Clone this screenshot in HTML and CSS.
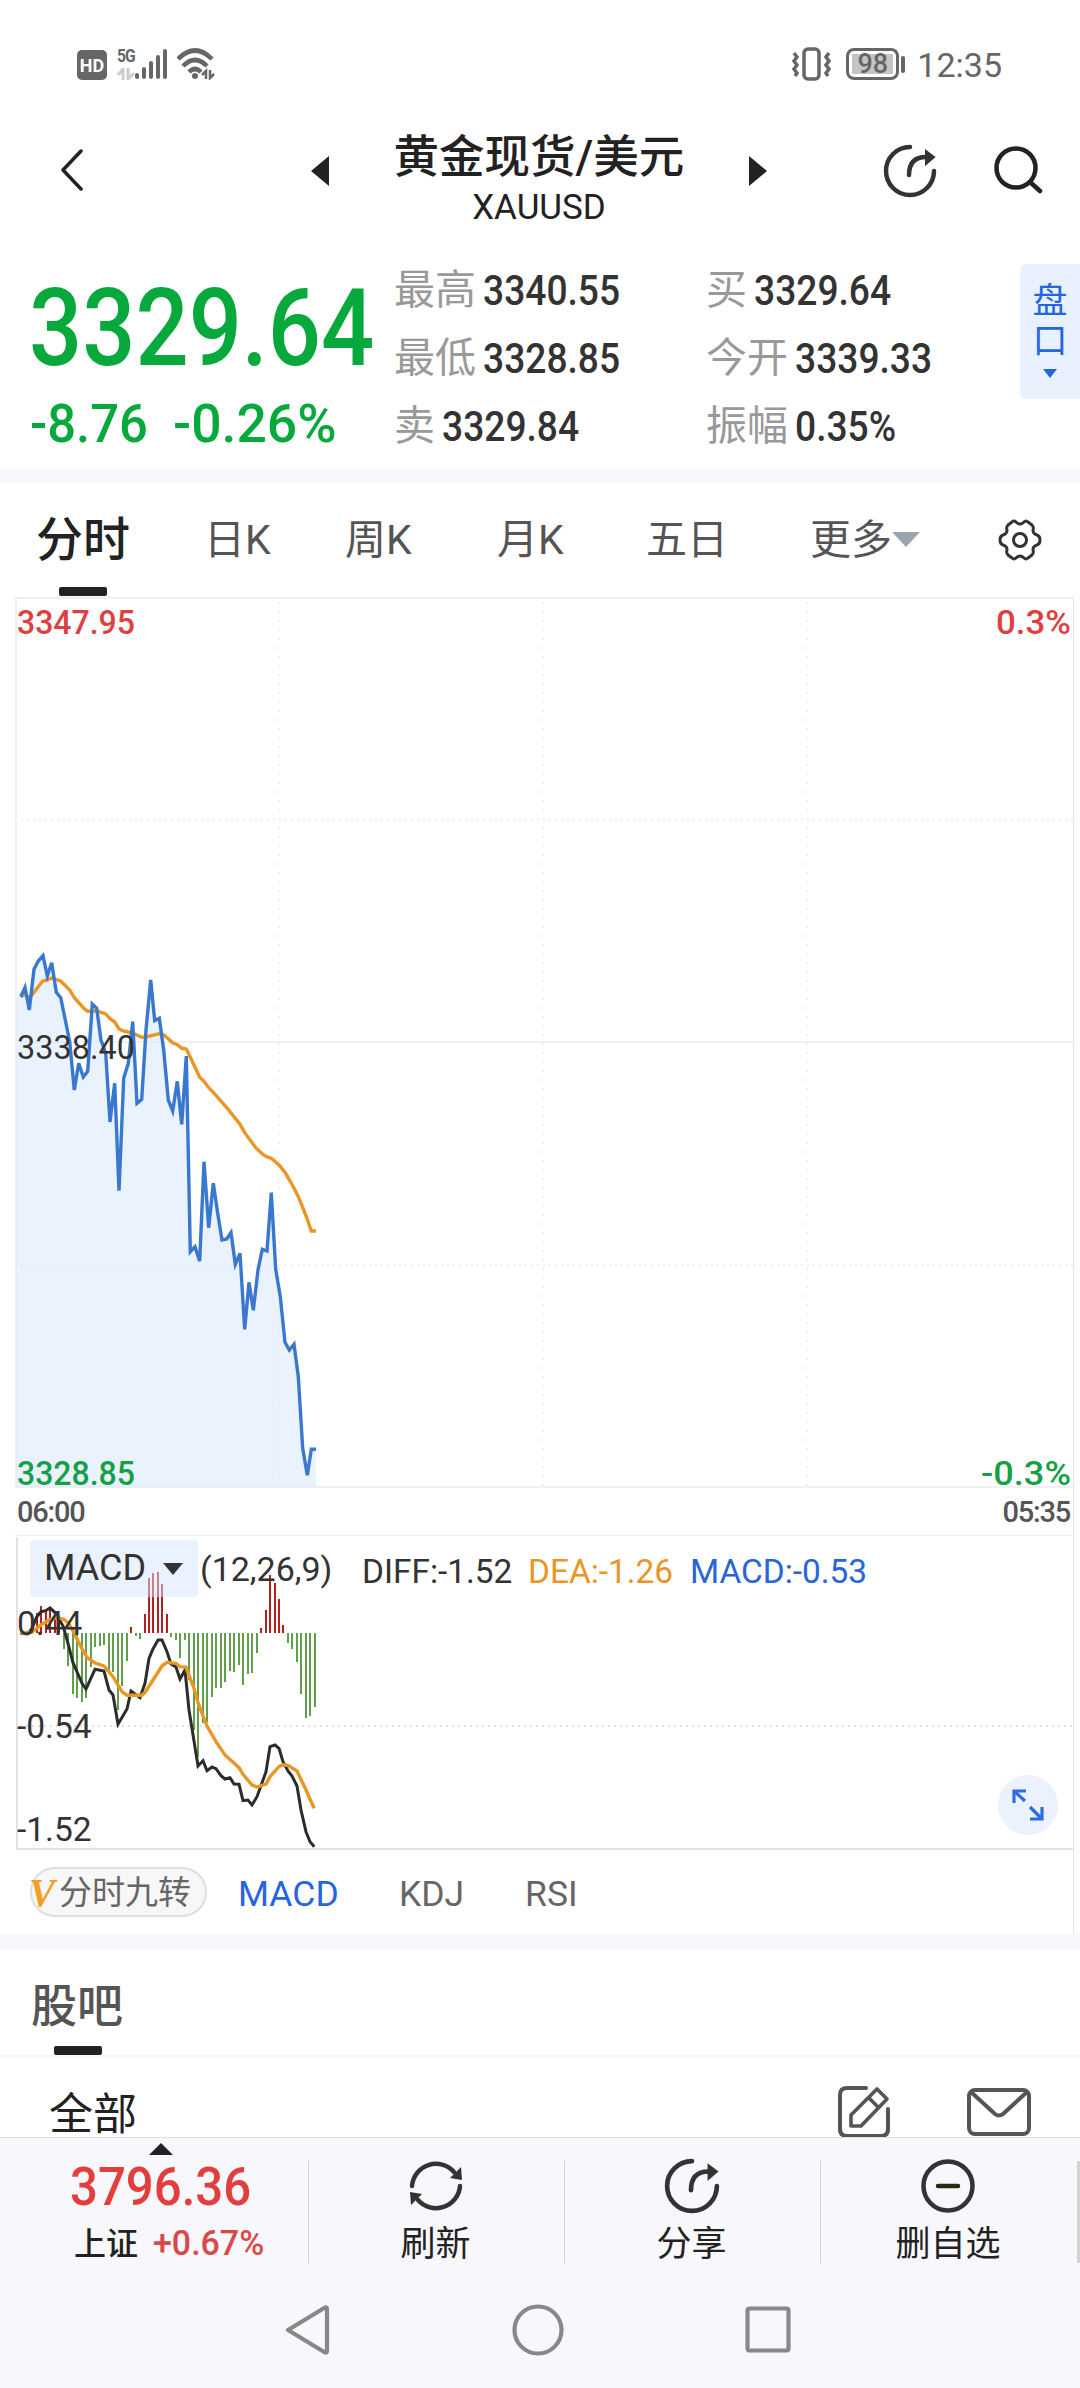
FILE: index.html
```html
<!DOCTYPE html>
<html lang="zh-CN">
<head>
    <meta charset="UTF-8">
    <meta name="viewport" content="width=device-width, initial-scale=1.0">
    <title>黄金现货/美元 XAUUSD</title>
    <link rel="stylesheet" href="styles.css">
</head>
<body>
    <!-- 系统状态栏 -->
    <div class="status-bar">
        <span class="hd-badge">HD</span>
        <div class="network">
            <span class="network-type">5G</span>
            <svg width="18" height="12" viewBox="0 0 18 12" fill="none" stroke="#ccc" stroke-width="3"><path d="M1 7 6 1V12M11 0V11L17 5"/></svg>
        </div>
        <svg class="signal" width="32" height="30" viewBox="0 0 32 30" fill="none" stroke="#666" stroke-width="4" stroke-linecap="round"><path d="M2 26V28M9 20V28M16 14V28M23 8V28M30 2V28"/></svg>
        <svg class="wifi" width="38" height="32" viewBox="0 0 38 32" fill="none" stroke="#666" stroke-width="4.5"><path d="M1 11Q18-6 35 11M6 18Q18 6 30 18M12 24Q18 18 24 24"/><circle cx="18" cy="28" r="3" fill="#666" stroke="none"/><path d="M25 27 29 23V31M33 22V30L37 26" stroke-width="2.5"/></svg>
        <svg class="vibrate" width="42" height="34" viewBox="0 0 42 34" fill="none" stroke="#666" stroke-width="3.5"><rect x="13" y="2" width="15" height="30" rx="4"/><path d="M3 6 6 10 3 14 6 18 3 22 6 26 4 29M38 6 35 10 38 14 35 18 38 22 35 26 37 29"/></svg>
        <div class="battery">98</div>
        <span class="clock">12:35</span>
    </div>

    <header class="header">
        <svg class="back" width="24" height="42" viewBox="0 0 24 42" fill="none" stroke="#222" stroke-width="3.5" stroke-linecap="round" stroke-linejoin="round"><path d="M21 2 3 21 21 40"/></svg>
        <div class="stock-switch">
            <svg width="18" height="30" viewBox="0 0 18 30" fill="#222"><path d="M0 15 18 0V30Z"/></svg>
            <div class="stock-name">
                <h1>黄金现货/美元</h1>
                <p>XAUUSD</p>
            </div>
            <svg width="18" height="30" viewBox="0 0 18 30" fill="#222"><path d="M18 15 0 0V30Z"/></svg>
        </div>
        <svg class="share" width="54" height="54" viewBox="0 0 54 54" fill="none" stroke="#333" stroke-width="4.5" stroke-linecap="round"><path d="M27 3A24 24 0 1 0 51 27"/><path d="M26 31C26 19 32 13 43 13"/><path d="M43 7V20L51 13Z" fill="#333" stroke-width="2"/></svg>
        <svg class="search" width="50" height="48" viewBox="0 0 50 48" fill="none" stroke="#222" stroke-width="4.5" stroke-linecap="round"><circle cx="22" cy="22" r="19.5"/><path d="M36 36 46 45"/></svg>
    </header>

    <section class="quote">
        <div class="quote-main">
            <div class="price"><span>3329.64</span></div>
            <div class="change"><span>-8.76</span><span class="percent">-0.26%</span></div>
        </div>
        <dl class="quote-grid">
            <div><dt>最高</dt><dd>3340.55</dd></div>
            <div><dt>买</dt><dd>3329.64</dd></div>
            <div><dt>最低</dt><dd>3328.85</dd></div>
            <div><dt>今开</dt><dd>3339.33</dd></div>
            <div><dt>卖</dt><dd>3329.84</dd></div>
            <div><dt>振幅</dt><dd>0.35%</dd></div>
        </dl>
        <div class="pankou">
            <span>盘</span>
            <span>口</span>
            <svg width="14" height="9" viewBox="0 0 14 9" fill="#2465e4"><path d="M0 0H14L7 9Z"/></svg>
        </div>
    </section>

    <!-- 周期切换 -->
    <nav class="period-tabs">
        <span class="period active">分时</span>
        <span class="period">日K</span>
        <span class="period">周K</span>
        <span class="period">月K</span>
        <span class="period">五日</span>
        <span class="period more">更多<svg width="28" height="15" viewBox="0 0 28 15" fill="#9aa5ae"><path d="M0 0H28L14 15Z"/></svg></span>
        <svg class="gear" width="44" height="42" viewBox="0 0 44 42" fill="none" stroke="#333" stroke-width="3" stroke-linejoin="round"><path d="M14 3Q16 1 18 3Q22 7 26 3Q28 1 30 3L34 6Q36 8 35 11Q35 15 39 16Q42 17 42 21Q42 25 39 26Q35 27 35 31Q36 34 34 36L30 39Q28 41 26 39Q22 35 18 39Q16 41 14 39L10 36Q8 34 9 31Q9 27 5 26Q2 25 2 21Q2 17 5 16Q9 15 9 11Q8 8 10 6Z"/><circle cx="22" cy="21" r="6.5"/></svg>
    </nav>

    <div class="chart-area">
        <!-- 分时走势 -->
        <svg class="price-chart" width="1080" height="891" viewBox="0 597 1080 891">
            <g class="grid">
                <path d="M16 598H1073M16 1042H1073M16 1487H1073M16 597V1487"/>
                <path class="dot-h" d="M21 819.5H1073M21 1265H1073"/>
                <path class="dot-v" d="M279 602V1487M543 602V1487M807 602V1487"/>
            </g>
            <polygon class="price-fill" points="16,997 20.7,996.7 25,987.5 29.3,1010 34,969.3 38.3,961 43,955.7 47.3,976 51.7,962.7 56.3,992.3 60.7,997.7 65.3,1020 69.7,1041.7 74.3,1090 78.7,1063.3 83.3,1077 87.7,1071.3 92.3,1004 96.7,1008.3 101,1040 105.7,1053 110,1122 114.7,1083.3 119,1190.7 123.7,1078.3 128.3,1063.3 132.7,1021.7 137,1103.3 141.7,1099.3 146,1030 150.7,980 154.7,1020.7 159.3,1018.3 163.7,1050 168.3,1100 172.7,1111 177.3,1081.3 181.7,1124.3 186.3,1056 190.3,1251.7 195,1246.7 199.7,1261.3 204,1161.7 208.7,1227.7 213.3,1183.3 217.7,1213.3 222,1240 226.7,1239 231,1232.7 235.3,1264.3 240,1253.3 244.7,1329.3 249,1282.3 253.3,1310.3 258,1270 262.3,1249.3 267,1251 271.3,1192.7 275.7,1269.3 280.3,1296.7 285,1342.3 289.3,1350 294,1344.3 298.3,1376.7 302.7,1448.3 307.3,1475.3 311.3,1449.3 316,1449.3 316,1487 16,1487"/>
            <polyline class="avg-line" points="20.7,996.7 25,994 29.3,998.3 33.3,993.3 42.7,981 47.3,980 51.7,978 60.7,981 69.7,990 74.3,997.7 83.3,1007.7 87.7,1011.3 96.7,1011 105.7,1014 110,1018.7 114.7,1022 119,1029 123.7,1031 132.7,1033 141.7,1037.3 146,1037 159.3,1033.7 163.7,1034.7 172.7,1042.7 177.3,1044.7 181.7,1048.3 186.3,1049 190.3,1057.3 199.7,1077.3 204,1081.3 208.7,1087.7 213.3,1092.3 226.7,1107.7 240,1124.3 244.7,1132.7 255.7,1147.7 262.3,1154 267,1157 271.3,1158.3 279,1165 285,1172.3 293.3,1186.7 298.3,1196.7 302.7,1207.3 307.3,1219.3 311.3,1231 316,1231"/>
            <polyline class="price-line" points="20.7,996.7 25,987.5 29.3,1010 34,969.3 38.3,961 43,955.7 47.3,976 51.7,962.7 56.3,992.3 60.7,997.7 65.3,1020 69.7,1041.7 74.3,1090 78.7,1063.3 83.3,1077 87.7,1071.3 92.3,1004 96.7,1008.3 101,1040 105.7,1053 110,1122 114.7,1083.3 119,1190.7 123.7,1078.3 128.3,1063.3 132.7,1021.7 137,1103.3 141.7,1099.3 146,1030 150.7,980 154.7,1020.7 159.3,1018.3 163.7,1050 168.3,1100 172.7,1111 177.3,1081.3 181.7,1124.3 186.3,1056 190.3,1251.7 195,1246.7 199.7,1261.3 204,1161.7 208.7,1227.7 213.3,1183.3 217.7,1213.3 222,1240 226.7,1239 231,1232.7 235.3,1264.3 240,1253.3 244.7,1329.3 249,1282.3 253.3,1310.3 258,1270 262.3,1249.3 267,1251 271.3,1192.7 275.7,1269.3 280.3,1296.7 285,1342.3 289.3,1350 294,1344.3 298.3,1376.7 302.7,1448.3 307.3,1475.3 311.3,1449.3 316,1449.3"/>
            <g class="chart-label">
                <text class="up" x="17" y="634" textLength="118" lengthAdjust="spacingAndGlyphs">3347.95</text>
                <text class="up" x="996" y="634" textLength="75" lengthAdjust="spacingAndGlyphs">0.3%</text>
                <text x="17" y="1058.5" textLength="118" lengthAdjust="spacingAndGlyphs">3338.40</text>
                <text class="down" x="17" y="1485" textLength="118" lengthAdjust="spacingAndGlyphs">3328.85</text>
                <text class="down" x="981" y="1485" textLength="90" lengthAdjust="spacingAndGlyphs">-0.3%</text>
            </g>
        </svg>

        <div class="time-axis">
            <span>06:00</span>
            <span>05:35</span>
        </div>

        <!-- MACD 副图 -->
        <div class="macd">
            <svg width="1080" height="315" viewBox="0 1535 1080 315">
                <path d="M15 1535.5H1073" stroke="#f0f0f0"/>
                <path d="M17 1537V1849H1073" fill="none" stroke="#e2e2e2" stroke-width="2"/>
                <path d="M20 1726H1073" stroke="#e2e2e2" stroke-width="2" stroke-dasharray="2 4"/>
                <path class="bar-up" d="M37 1633V1613M41 1633V1606M46 1633V1610M50 1633V1608M55 1633V1617M59 1633V1621M131 1633V1627M145 1633V1614M149 1633V1578M153 1633V1573M158 1633V1572M162 1633V1584M167 1633V1614M261 1633V1628M266 1633V1610M270 1633V1575M275 1633V1583M279 1633V1599M283 1633V1625"/>
                <path class="bar-down" d="M64 1633V1649M68 1633V1666M73 1633V1694M77 1633V1698M82 1633V1702M86 1633V1698M91 1633V1667M95 1633V1647M100 1633V1646M104 1633V1645M109 1633V1670M113 1633V1672M118 1633V1710M122 1633V1686M127 1633V1661M136 1633V1636M140 1633V1639M171 1633V1637M176 1633V1640M180 1633V1658M185 1633V1640M189 1633V1680M194 1633V1730M198 1633V1757M203 1633V1723M207 1633V1722M212 1633V1697M216 1633V1688M221 1633V1688M225 1633V1682M230 1633V1671M234 1633V1672M239 1633V1665M243 1633V1685M248 1633V1674M252 1633V1673M257 1633V1653M288 1633V1643M292 1633V1649M297 1633V1662M301 1633V1694M306 1633V1718M310 1633V1716M315 1633V1707"/>
                <polyline class="diff-line" points="20,1633 27.3,1634 31.7,1629 36.7,1617 41,1611.7 45.7,1610.7 50,1608 54.7,1612.3 59.3,1619.3 63.3,1626.7 68,1643.3 73,1662.7 82,1683.3 86,1689 95,1669.3 104,1671 109,1690 113,1695 118,1724.3 127,1709 131,1691 134,1693.3 140,1697.7 145,1683.3 149,1658.3 153,1649 158,1640 162,1640 167,1651.7 171,1664 176,1667 180,1679 185,1670 189,1710 194,1741 198,1766 203,1760.7 207,1770.7 212,1767 216,1768.7 221,1775.7 225,1779 230,1777.7 234,1784 239,1784.3 243,1800.7 248,1800 252,1805 257,1796.7 266,1771.7 270,1746.7 275,1745 279,1748.3 283,1761.7 288,1771 292,1776 297,1786 301,1810 306,1831.7 310,1841.7 314.3,1846.7"/>
                <polyline class="dea-line" points="20,1633 31.7,1632.3 41,1625 50,1619.3 57,1617.7 63.3,1619 68,1622.7 73,1630.7 82,1649 87,1657.3 95,1663 104,1666 113,1676.7 122,1691.7 127,1695.3 141.7,1695.3 145,1692.7 153,1680 162,1666 167,1662.3 176,1663.3 180,1666.7 186,1667.3 194,1688.3 198,1702.7 207,1726 216,1741.7 225,1755 239,1767.7 243,1774.3 252,1785 257,1787 266,1784 270,1776.7 279,1766.7 283,1764.7 288,1765.3 297,1771 306,1790 310,1799.3 314.3,1808.3"/>
                <g class="macd-label">
                    <text x="17" y="1635">0.44</text>
                    <text x="17" y="1738">-0.54</text>
                    <text x="17" y="1841">-1.52</text>
                </g>
            </svg>
            <div class="macd-head">
                <div class="macd-select">MACD<svg width="20" height="12" viewBox="0 0 20 12" fill="#333"><path d="M0 0H20L10 12Z"/></svg></div>
                <span class="params">(12,26,9)</span>
                <span class="diff">DIFF:-1.52</span>
                <span class="dea">DEA:-1.26</span>
                <span class="macd-value">MACD:-0.53</span>
            </div>
            <div class="expand">
                <svg width="32" height="32" viewBox="0 0 32 32" fill="none" stroke="#2f6be6" stroke-width="3.2"><path d="M14 2H2V14M2 2 13 12M18 30H30V18M30 30 18 18"/></svg>
            </div>
        </div>

        <div class="indicator-tabs">
            <div class="nine-turn"><i>V</i>分时九转</div>
            <span class="active">MACD</span>
            <span>KDJ</span>
            <span>RSI</span>
        </div>
    </div>

    <section class="guba">
        <h2>股吧</h2>
    </section>
    <div class="post-filter">
        <span>全部</span>
        <svg class="edit" width="52" height="52" viewBox="0 0 52 52" fill="none" stroke="#555" stroke-width="4" stroke-linecap="round" stroke-linejoin="round"><path d="M28 2H9Q2 2 2 9V43Q2 50 9 50H43Q50 50 50 43V23"/><path d="M13 40V29L39 3 49 13 23 40ZM31 12 40 21" stroke-width="3.6"/></svg>
        <svg class="mail" width="64" height="48" viewBox="0 0 64 48" fill="none" stroke="#555" stroke-width="4" stroke-linejoin="round"><rect x="2" y="2" width="60" height="44" rx="6"/><path d="M4 4 28 26Q32 29 36 26L60 4"/></svg>
    </div>

    <!-- 底部工具栏 -->
    <footer class="toolbar">
        <div class="index">
            <svg class="index-arrow" width="24" height="12" viewBox="0 0 24 12" fill="#222"><path d="M0 12 12 0 24 12Z"/></svg>
            <div class="index-price"><span>3796.36</span></div>
            <div class="index-info">上证<span>+0.67%</span></div>
        </div>
        <div class="tool">
            <svg width="56" height="56" viewBox="0 0 56 56" fill="none" stroke="#333" stroke-width="4.5" stroke-linecap="round"><path d="M4 28A24 24 0 0 1 46 14M52 28A24 24 0 0 1 10 42"/><path d="M42 20 54 22 53 9ZM14 36 2 34 3 47Z" fill="#333" stroke="none"/></svg>
            <span>刷新</span>
        </div>
        <div class="tool">
            <svg width="56" height="56" viewBox="0 0 54 54" fill="none" stroke="#333" stroke-width="4.5" stroke-linecap="round"><path d="M27 3A24 24 0 1 0 51 27"/><path d="M26 31C26 19 32 13 43 13"/><path d="M43 7V20L51 13Z" fill="#333" stroke-width="2"/></svg>
            <span>分享</span>
        </div>
        <div class="tool">
            <svg width="56" height="56" viewBox="0 0 56 56" fill="none" stroke="#333" stroke-width="4.5" stroke-linecap="round"><circle cx="28" cy="28" r="24.5"/><path d="M18 28H38" stroke="#2a2a10"/></svg>
            <span>删自选</span>
        </div>
    </footer>
    <div class="system-nav">
        <svg width="46" height="52" viewBox="0 0 46 52" fill="none" stroke="#888" stroke-width="4.2" stroke-linejoin="round"><path d="M3 26 40 3.5Q42 3 42 5V47Q42 49 40 48.500Z"/></svg>
        <svg width="52" height="52" viewBox="0 0 52 52" fill="none" stroke="#888" stroke-width="4.2"><circle cx="26" cy="26" r="23.500"/></svg>
        <svg width="46" height="48" viewBox="0 0 46 48" fill="none" stroke="#888" stroke-width="4.2"><rect x="2.500" y="2.500" width="41" height="42" rx="2"/></svg>
    </div>
</body>
</html>
```

FILE: styles.css
```css
* {
    box-sizing: border-box;
    margin: 0;
    padding: 0;
}
body {
    width: 1080px;
    height: 2388px;
    overflow: hidden;
    background: #fff;
    color: #222;
    font-family: Roboto, 'Noto Sans CJK SC', sans-serif;
}
svg {
    display: block;
    flex-shrink: 0;
}

/* 状态栏 */
.status-bar {
    display: flex;
    height: 110px;
    padding: 48px 78px 0 77px;
    color: #666;
}
.hd-badge {
    width: 30px;
    height: 30px;
    margin-top: 2px;
    border-radius: 5px;
    background: #666;
    color: #fff;
    font-size: 18px;
    font-weight: 700;
    line-height: 31px;
    text-align: center;
}
.network {
    width: 18px;
    margin-left: 10px;
}
.network-type {
    display: block;
    height: 20px;
    font-size: 19px;
    font-weight: 700;
    line-height: 16px;
    letter-spacing: -1px;
    transform: scaleX(.82);
    transform-origin: left;
}
.signal {
    margin-top: 1px;
}
.wifi {
    margin-left: 10px;
}
.vibrate {
    margin-left: auto;
    margin-right: 2px;
    margin-top: -1px;
}
.battery {
    position: relative;
    width: 53px;
    height: 32px;
    margin: 0 18px 0 11px;
    border: 3px solid #666;
    border-radius: 8px;
    background: linear-gradient(#c4c4c4, #c4c4c4) center / 41px 20px no-repeat;
    font-size: 27px;
    font-weight: 500;
    line-height: 27px;
    text-align: center;
}
.battery::after {
    content: "";
    position: absolute;
    right: -9px;
    top: 5px;
    width: 4px;
    height: 17px;
    border-radius: 2px;
    background: #666;
}
.clock {
    font-size: 34px;
    line-height: 34px;
    white-space: nowrap;
}

/* 标题栏 */
.header {
    display: flex;
    height: 130px;
    padding: 0 36px 0 60px;
}
.back {
    margin-top: 39px;
}
.stock-switch {
    display: flex;
    width: 456px;
    margin-left: 227px;
    justify-content: space-between;
}
.stock-switch > svg {
    margin-top: 46px;
}
.stock-name {
    text-align: center;
}
.stock-name h1 {
    height: 72px;
    padding-top: 17px;
    font-size: 45.5px;
    font-weight: 500;
    line-height: 62px;
    white-space: nowrap;
}
.stock-name p {
    height: 50px;
    font-size: 35px;
    line-height: 52px;
}
.share {
    margin: 34px 0 0 116px;
}
.search {
    margin: 36px 0 0 auto;
}

/* 行情 */
.quote {
    display: flex;
    height: 243px;
    border-bottom: 15px solid #f7f8fd;
}
.quote-main {
    width: 394px;
    padding: 27px 0 0 29px;
    color: #07a83c;
    font-weight: 500;
}
.price {
    height: 130px;
    font-size: 107px;
    line-height: 123px;
}
.price span {
    display: inline-block;
    transform: scaleX(.875);
    transform-origin: left;
}
.change {
    display: flex;
    height: 60px;
    padding-left: 1px;
    font-size: 54px;
    line-height: 54px;
}
.change span {
    width: 143px;
    transform: scaleX(.94);
    transform-origin: left;
}
.change .percent {
    transform: scaleX(.99);
}
.quote-grid {
    display: grid;
    grid-template-columns: 312px 290px;
    grid-template-rows: repeat(3, 68px);
    padding-top: 17px;
}
.quote-grid div {
    display: flex;
    gap: 7px;
    line-height: 68px;
}
.quote-grid dt {
    color: #999;
    font-size: 41px;
    line-height: 66px;
}
.quote-grid dd {
    color: #333;
    font-size: 42px;
    font-weight: 500;
    transform: scaleX(.885);
    transform-origin: left;
}
.pankou {
    display: flex;
    flex-direction: column;
    align-items: center;
    width: 60px;
    height: 135px;
    margin: 24px 0 0 auto;
    padding-top: 18px;
    border-radius: 6px 0 0 6px;
    background: #eaf1fe;
    color: #2465e4;
    font-size: 35px;
}
.pankou span {
    height: 40px;
    line-height: 40px;
}
.pankou svg {
    margin-top: 7px;
}

/* 周期 */
.period-tabs {
    display: grid;
    grid-template-columns: 168px 141px 152px 149px 164px 190px auto;
    height: 114px;
    padding-left: 36px;
    color: #555;
    font-size: 41px;
    line-height: 114px;
}
.period {
    position: relative;
    white-space: nowrap;
}
.period.active {
    color: #222;
    font-size: 47px;
    font-weight: 500;
}
.period.active::after {
    content: "";
    position: absolute;
    left: 23px;
    bottom: 1px;
    width: 48px;
    height: 9px;
    border-radius: 2px;
    background: #222;
}
.more {
    display: flex;
}
.more svg {
    margin-top: 49px;
}
.gear {
    margin: 36px 0 0 -2px;
}

/* 图表 */
.chart-area {
    position: relative;
    height: 1353px;
    border-bottom: 16px solid #f7f8fd;
}
.chart-area::after {
    content: "";
    position: absolute;
    left: 1073px;
    top: 0;
    bottom: 0;
    width: 1px;
    background: #e6e6e6;
}
.grid path {
    fill: none;
    stroke: #f0f0f2;
    stroke-width: 2;
}
.grid .dot-h {
    stroke-dasharray: 2 4;
}
.grid .dot-v {
    stroke-dasharray: 2 7;
}
.price-fill {
    fill: #d8e7fe;
    fill-opacity: .53;
}
.price-line,
.avg-line,
.diff-line,
.dea-line {
    fill: none;
    stroke-width: 3.4;
}
.price-line {
    stroke: #3a78cf;
}
.avg-line,
.dea-line {
    stroke: #ea9625;
}
.diff-line {
    stroke: #2c2c2c;
    stroke-width: 3;
}
.chart-label {
    fill: #333;
    font-size: 34px;
}
.chart-label .up {
    fill: #dc4040;
    font-weight: 500;
}
.chart-label .down {
    fill: #14a046;
    font-weight: 500;
}
.time-axis {
    display: flex;
    justify-content: space-between;
    height: 47px;
    padding: 0 10px 0 17px;
    color: #555;
    font-size: 29px;
    font-weight: 500;
    line-height: 49px;
    letter-spacing: -1.2px;
}
.macd {
    position: relative;
    height: 315px;
}
.bar-up {
    stroke: #b5201f;
    stroke-width: 2;
}
.bar-down {
    stroke: #61a04a;
    stroke-width: 2;
}
.macd-label {
    fill: #333;
    font-size: 33.5px;
}
.macd-head {
    position: absolute;
    left: 30px;
    top: 5px;
    display: flex;
    color: #333;
    font-size: 34px;
    line-height: 63px;
    white-space: nowrap;
}
.macd-select {
    display: flex;
    align-items: center;
    justify-content: space-between;
    width: 168px;
    height: 57px;
    padding: 0 15px 0 14px;
    border-radius: 4px;
    background: rgba(216, 229, 255, .5);
    font-size: 36px;
}
.params {
    width: 164px;
    padding-left: 2px;
    line-height: 58px;
}
.diff {
    width: 166px;
}
.dea {
    width: 162px;
    color: #ea9625;
}
.macd-value {
    color: #2765d8;
}
.diff,
.dea,
.macd-value {
    font-size: 33.4px;
}
.expand {
    position: absolute;
    left: 998px;
    top: 240px;
    width: 60px;
    height: 60px;
    padding: 14px;
    border-radius: 50%;
    background: #ebf2fe;
}
.indicator-tabs {
    display: flex;
    height: 84px;
    padding: 17px 0 0 30px;
    color: #666;
    font-size: 35.5px;
    line-height: 54px;
}
.indicator-tabs .active {
    width: 161px;
    color: #2765e0;
}
.indicator-tabs span {
    width: 126px;
}
.nine-turn {
    display: flex;
    width: 177px;
    height: 50px;
    margin-right: 31px;
    border: 2px solid #dedede;
    border-radius: 25px;
    background: #f7f7f7;
    font-size: 33px;
    line-height: 48px;
    white-space: nowrap;
}
.nine-turn i {
    width: 28px;
    margin-left: -3px;
    margin-right: 2px;
    color: #f0a022;
    font-family: 'Liberation Serif', serif;
    font-size: 39px;
    font-weight: 700;
}

/* 股吧 */
.guba {
    position: relative;
    height: 108px;
    padding-left: 31px;
    border-bottom: 3px solid #f7f8fd;
}
.guba h2 {
    color: #555;
    font-size: 46px;
    font-weight: 500;
    line-height: 112px;
}
.guba::after {
    content: "";
    position: absolute;
    left: 54px;
    bottom: 0;
    width: 48px;
    height: 9px;
    border-radius: 2px;
    background: #222;
}
.post-filter {
    display: flex;
    height: 79px;
    padding: 0 49px;
    font-size: 44px;
    line-height: 114px;
    overflow: hidden;
}
.edit {
    margin: 28px 77px 0 auto;
}
.mail {
    margin-top: 30px;
}

/* 底部 */
.toolbar {
    display: grid;
    grid-template-columns: 308px 256px 256px 257px 3px;
    height: 133px;
    border-top: 1px solid #dedede;
    background: #f7f7fc;
}
.toolbar::after {
    content: "";
    height: 102px;
    margin-top: 23px;
    background: #d2d2d2;
}
.index {
    position: relative;
    padding: 22px 0 0 70px;
}
.index-arrow {
    position: absolute;
    left: 149px;
    top: 5px;
}
.index-price {
    height: 54px;
    color: #e33e3e;
    font-size: 54px;
    font-weight: 500;
    line-height: 54px;
}
.index-price span,
.index-info span {
    display: inline-block;
    transform: scaleX(.91);
    transform-origin: left;
}
.index-info {
    padding-left: 4px;
    font-size: 32px;
    font-weight: 500;
    line-height: 60px;
    white-space: nowrap;
}
.index-info span {
    margin-left: 15px;
    color: #db4848;
    font-size: 35px;
    line-height: 50px;
    transform: scaleX(.97);
}
.tool {
    display: flex;
    flex-direction: column;
    align-items: center;
    height: 102px;
    margin-top: 23px;
    padding-right: 2px;
    border-left: 1px solid #d2d2d6;
    font-size: 35px;
}
.tool svg {
    margin-top: -3px;
}
.tool span {
    height: 54px;
    line-height: 62px;
}
.system-nav {
    display: flex;
    justify-content: space-between;
    align-items: center;
    height: 118px;
    padding: 1px 289px 0 285px;
    background: #f7f7fc;
}
```
